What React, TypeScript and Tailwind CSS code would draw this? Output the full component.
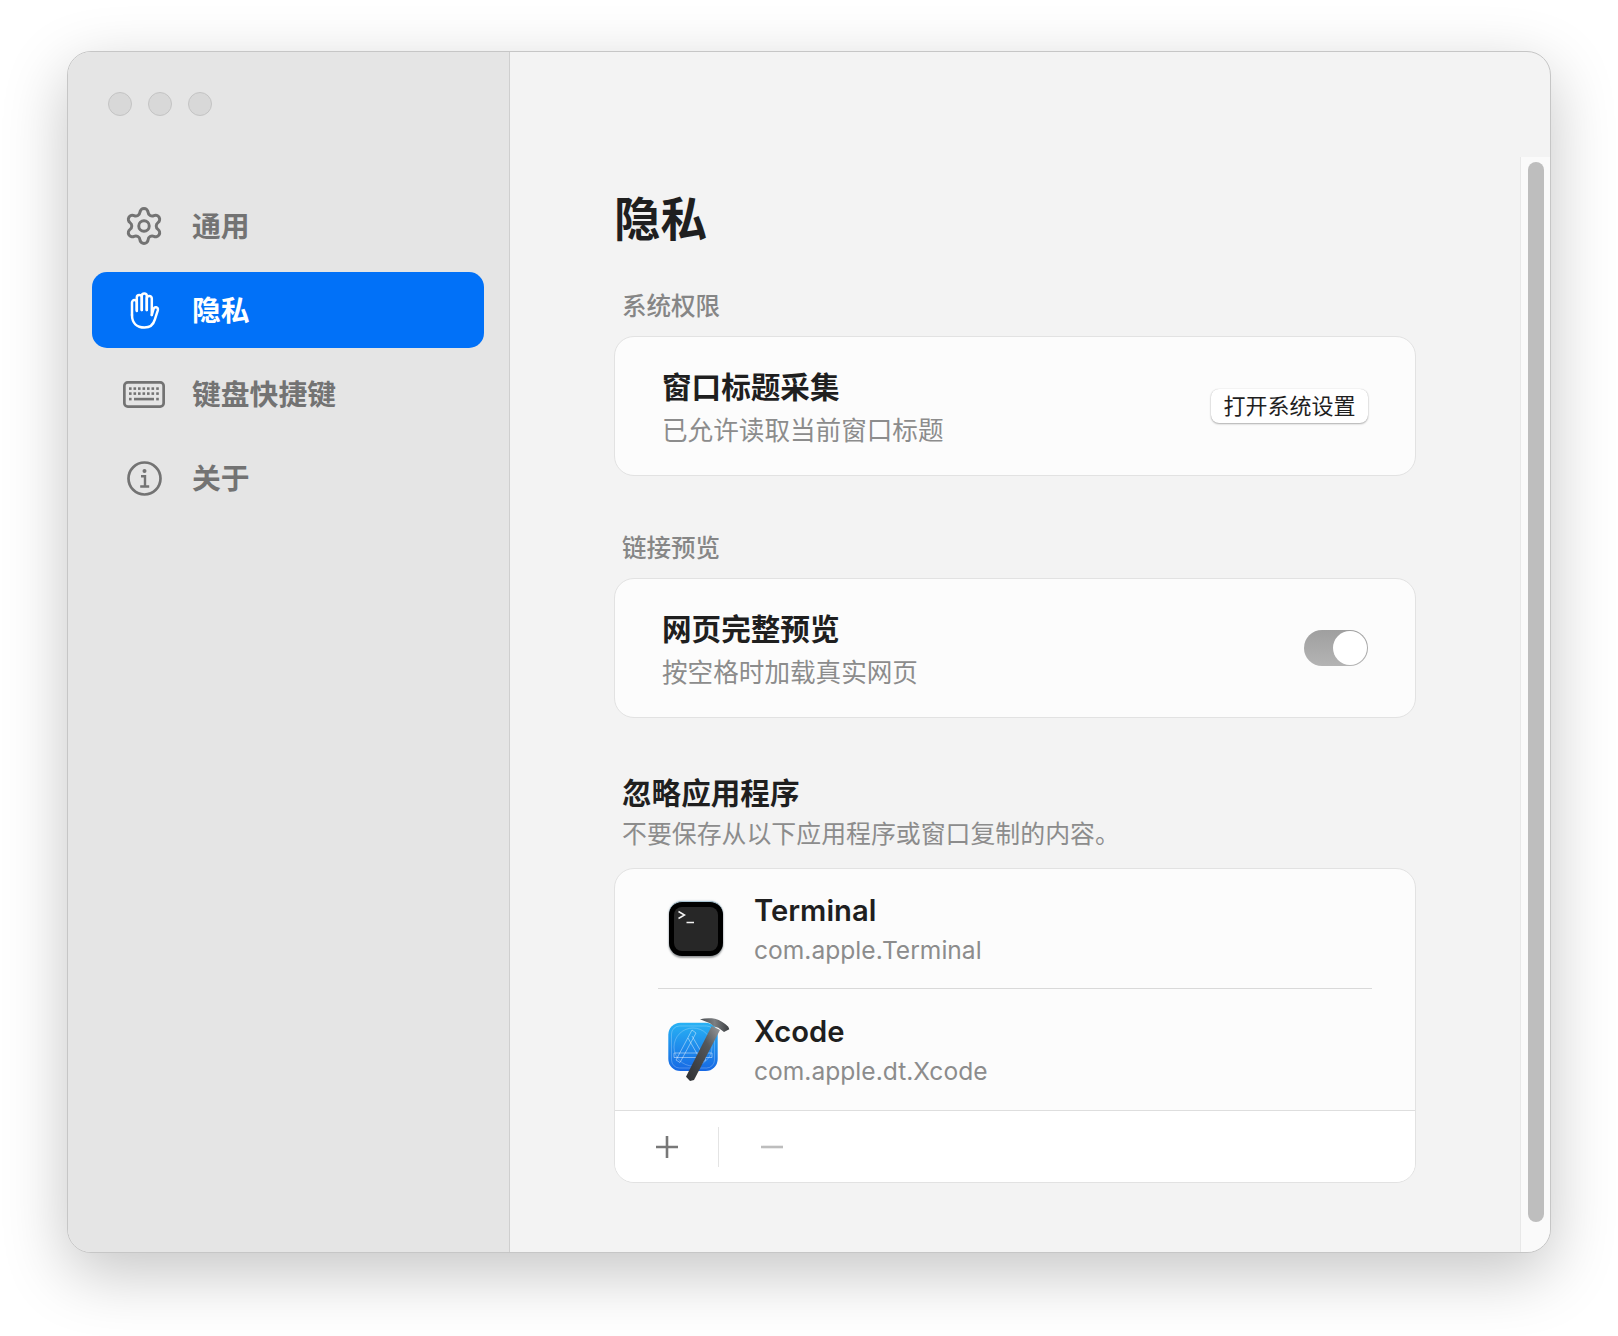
import { FC, ReactNode } from 'react';
import { Settings } from 'lucide-react';

const HandIcon: FC = () => (
  <svg width="30" height="37" viewBox="0 0 30 37" fill="none" stroke="#fff" strokeWidth="2.5" strokeLinecap="round" strokeLinejoin="round" className="ml-[2px]">
    <path d="M2 23V10.5a2.4 2.4 0 0 1 4.8 0V19" />
    <path d="M6.8 18V5.5a2.5 2.5 0 0 1 5 0V18" />
    <path d="M11.8 18V4a2.5 2.5 0 0 1 5 0v14" />
    <path d="M16.8 18V6.5a2.5 2.5 0 0 1 5 0V23" />
    <path d="M21.8 23l1.6-5.5c.5-1.6 1.5-2.6 2.9-2.3 1.4.3 1.9 1.6 1.5 3.2l-3 9.2C23.300 32.800 19.500 35.500 14.500 35.500 7 35.500 2 31 2 23" />
  </svg>
);

const KeyboardIcon: FC = () => (
  <svg width="42" height="27" viewBox="0 0 42 27" fill="none">
    <rect x="1.350" y="1.350" width="39.300" height="24.300" rx="3.500" stroke="#737373" strokeWidth="2.700" />
    <g fill="#737373">
      <rect x="6" y="6.300" width="2.600" height="2.600" />
      <rect x="10.500" y="6.300" width="2.600" height="2.600" />
      <rect x="15" y="6.300" width="2.600" height="2.600" />
      <rect x="19.500" y="6.300" width="2.600" height="2.600" />
      <rect x="24" y="6.300" width="2.600" height="2.600" />
      <rect x="28.500" y="6.300" width="2.600" height="2.600" />
      <rect x="33.200" y="6.300" width="2.600" height="2.600" />
      <rect x="6" y="11.300" width="2.600" height="2.600" />
      <rect x="10.500" y="11.300" width="2.600" height="2.600" />
      <rect x="15" y="11.300" width="2.600" height="2.600" />
      <rect x="19.500" y="11.300" width="2.600" height="2.600" />
      <rect x="24" y="11.300" width="2.600" height="2.600" />
      <rect x="28.500" y="11.300" width="2.600" height="2.600" />
      <rect x="33.200" y="11.300" width="2.600" height="2.600" />
      <rect x="6" y="16.800" width="2.600" height="2.600" />
      <rect x="11" y="16.800" width="20" height="2.600" />
      <rect x="33.200" y="16.800" width="2.600" height="2.600" />
    </g>
  </svg>
);

const InfoIcon: FC = () => (
  <svg width="35" height="35" viewBox="0 0 35 35" fill="none" stroke="#737373" strokeWidth="2.700">
    <circle cx="17.500" cy="17.500" r="16" />
    <circle cx="17.500" cy="10" r="2" fill="#737373" stroke="none" />
    <path d="M14 15.200H18V25M13.200 25.500H22.200" strokeWidth="2.400" />
  </svg>
);

const TerminalIcon: FC = () => (
  <div className="w-[54px] h-[55px] rounded-[13px] bg-black border-t border-t-[#a9c4d2] shadow-[0_2px_2px_rgba(0,0,0,0.35),0_0_2px_rgba(120,150,170,0.6)] p-[5px] flex-shrink-0 ml-[2px]">
    <div className="w-full h-full rounded-[8px] bg-[#272727]">
      <svg width="24" height="22" viewBox="0 0 24 22" fill="none" stroke="#f2f2f2" strokeWidth="1.500">
        <path d="M4.500 4.500L10.500 8L4.500 11.500" />
        <path d="M12.500 15.500H20" />
      </svg>
    </div>
  </div>
);

const XcodeIcon: FC = () => (
  <svg width="66" height="66" viewBox="14 11 66 66" fill="none" className="flex-shrink-0 -ml-[3px]">
    <defs>
      <linearGradient id="xcodeBlue" x1="0" y1="0" x2="0" y2="1">
        <stop offset="0" stopColor="#28b2f4" />
        <stop offset="1" stopColor="#1668e4" />
      </linearGradient>
      <linearGradient id="hammerHead" x1="0" y1="0" x2="1" y2="0">
        <stop offset="0" stopColor="#4a4d50" />
        <stop offset="0.5" stopColor="#7c7f82" />
        <stop offset="1" stopColor="#3a3d40" />
      </linearGradient>
      <linearGradient id="hammerHandle" x1="1" y1="0" x2="0" y2="1">
        <stop offset="0" stopColor="#9a9da0" />
        <stop offset="0.35" stopColor="#55585b" />
        <stop offset="1" stopColor="#2e3033" />
      </linearGradient>
    </defs>
    <rect x="18.300" y="16.700" width="49.400" height="48.300" rx="12" fill="url(#xcodeBlue)" />
    <g stroke="#ffffff" strokeOpacity="0.55" strokeWidth="0.8">
      <rect x="21.500" y="20" width="43" height="42" rx="8" strokeOpacity="0.3" />
      <circle cx="43" cy="41" r="19" strokeOpacity="0.3" />
      <path d="M42 24L26 54L30 56.500L46 27Z" />
      <path d="M38 32L52 56.500L56 54L42 30" />
      <path d="M24 47H62V51.500H24Z" />
    </g>
    <path d="M61.700 20L70 24L44 74L40 75L36 70.700Z" fill="url(#hammerHandle)" />
    <path d="M50 13.300C55 12 60 12 65 12.700C70 14 75 17.500 78.300 20.700L79.300 23.300L74 26L68.300 21.700L64 20.500L60 17.300Z" fill="url(#hammerHead)" />
  </svg>
);

const NavItem: FC<{ icon: ReactNode; label: string; active?: boolean }> = ({ icon, label, active }) => (
  <div
    className={`flex items-center h-[76px] rounded-[15px] text-[28.8px] leading-[36px] font-semibold ${
      active ? 'bg-[#0171f8] text-white' : 'text-[#737373]'
    }`}
  >
    <div className="w-[100px] pl-[4px] flex justify-center items-center flex-shrink-0">{icon}</div>
    <span className="pt-[1px]">{label}</span>
  </div>
);

const Card: FC<{ title: string; sub: string; children: ReactNode }> = ({ title, sub, children }) => (
  <div className="h-[140px] rounded-[20px] border border-[#e2e2e2] bg-[#fcfcfc] flex items-center justify-between pl-[47px] pr-[47px]">
    <div className="pt-[3px]">
      <div className="text-[29.6px] leading-[40px] font-semibold text-[#1f1f1f]">{title}</div>
      <div className="text-[25.6px] leading-[34px] mt-[7px] text-[#8c8c8c]">{sub}</div>
    </div>
    {children}
  </div>
);

const AppRow: FC<{ icon: ReactNode; name: string; id: string; rowClass: string }> = ({ icon, name, id, rowClass }) => (
  <div className={`flex items-center pl-[52px] ${rowClass}`}>
    <div className="w-[87px] flex items-center flex-shrink-0">{icon}</div>
    <div className="pt-[1px]">
      <div className="text-[29.2px] leading-[40px] font-semibold text-[#1f1f1f]">{name}</div>
      <div className="text-[24.6px] leading-[34px] mt-[2px] text-[#8c8c8c]">{id}</div>
    </div>
  </div>
);

const App: FC = () => {
  return (
    <div className="w-[1618px] h-[1336px] bg-white pl-[67px] pt-[51px] font-['Inter','Noto_Sans_CJK_SC',sans-serif]">
      <div className="w-[1484px] h-[1202px] rounded-[24px] border border-[#c6c6c6] bg-[#f3f3f3] overflow-hidden flex shadow-[0_20px_65px_rgba(0,0,0,0.23)]">
        <aside className="w-[442px] flex-shrink-0 bg-[#e5e5e5] border-r border-[#cfcfcf] pl-[24px] pr-[25px]">
          <div className="flex gap-[16px] pt-[40px] pl-[16px]">
            <div className="w-[24px] h-[24px] rounded-full bg-[#d8d8d8] border border-[#c4c4c4]" />
            <div className="w-[24px] h-[24px] rounded-full bg-[#d8d8d8] border border-[#c4c4c4]" />
            <div className="w-[24px] h-[24px] rounded-full bg-[#d8d8d8] border border-[#c4c4c4]" />
          </div>
          <nav className="mt-[72px] flex flex-col gap-[8px]">
            <NavItem icon={<Settings size={42} color="#737373" strokeWidth={1.7} />} label="通用" />
            <NavItem icon={<HandIcon />} label="隐私" active />
            <NavItem icon={<KeyboardIcon />} label="键盘快捷键" />
            <NavItem icon={<InfoIcon />} label="关于" />
          </nav>
        </aside>

        <main className="flex-1 pl-[104px] pt-[137px]">
          <div className="w-[802px]">
            <h1 className="text-[46.5px] leading-[60px] font-bold text-[#1f1f1f]">隐私</h1>

            <div className="mt-[40px] pl-[8px] text-[24.5px] leading-[34px] font-medium text-[#868686]">系统权限</div>
            <div className="mt-[13px]">
              <Card title="窗口标题采集" sub="已允许读取当前窗口标题">
                <button className="h-[34px] w-[157px] rounded-[8px] bg-white text-[22px] leading-[30px] text-[#1f1f1f] shadow-[0_1px_2px_rgba(0,0,0,0.3),0_0_1px_rgba(0,0,0,0.2)]">
                  打开系统设置
                </button>
              </Card>
            </div>

            <div className="mt-[55px] pl-[8px] text-[24.5px] leading-[34px] font-medium text-[#868686]">链接预览</div>
            <div className="mt-[13px]">
              <Card title="网页完整预览" sub="按空格时加载真实网页">
                <div className="w-[64px] h-[36px] rounded-full bg-gradient-to-b from-[#9f9f9f] to-[#b4b4b4] flex justify-end items-center pr-[1px]">
                  <div className="w-[34px] h-[34px] rounded-full bg-white" />
                </div>
              </Card>
            </div>

            <div className="mt-[55px] pl-[8px] text-[29.6px] leading-[40px] font-semibold text-[#1f1f1f]">忽略应用程序</div>
            <div className="mt-[4px] pl-[8px] text-[24.9px] leading-[34px] text-[#8c8c8c]">不要保存从以下应用程序或窗口复制的内容。</div>

            <div className="mt-[17px] rounded-[20px] border border-[#e2e2e2] bg-[#fcfcfc] overflow-hidden">
              <AppRow icon={<TerminalIcon />} name="Terminal" id="com.apple.Terminal" rowClass="h-[119px]" />
              <div className="h-px bg-[#d9d9d9] ml-[43px] mr-[43px]" />
              <AppRow icon={<XcodeIcon />} name="Xcode" id="com.apple.dt.Xcode" rowClass="h-[121px]" />
              <div className="h-[72px] border-t border-[#dedede] bg-white flex items-center">
                <div className="w-[104px] h-[40px] border-r border-[#e4e4e4] flex items-center pl-[40px]">
                  <svg width="24" height="24" viewBox="0 0 24 24" fill="none" stroke="#787878" strokeWidth="2.600">
                    <path d="M12 1V23M1 12H23" />
                  </svg>
                </div>
                <div className="pl-[41px] flex items-center">
                  <svg width="24" height="24" viewBox="0 0 24 24" fill="none" stroke="#bdbdbd" strokeWidth="2.600">
                    <path d="M1 12H23" />
                  </svg>
                </div>
              </div>
            </div>
          </div>
        </main>

        <div className="w-[30px] flex-shrink-0 mt-[105px] bg-[#fafafa] border-l border-[#e8e8e8] pt-[5px] pl-[7px]">
          <div className="w-[16px] h-[1060px] rounded-full bg-[#bebebe]" />
        </div>
      </div>
    </div>
  );
};

export default App;
